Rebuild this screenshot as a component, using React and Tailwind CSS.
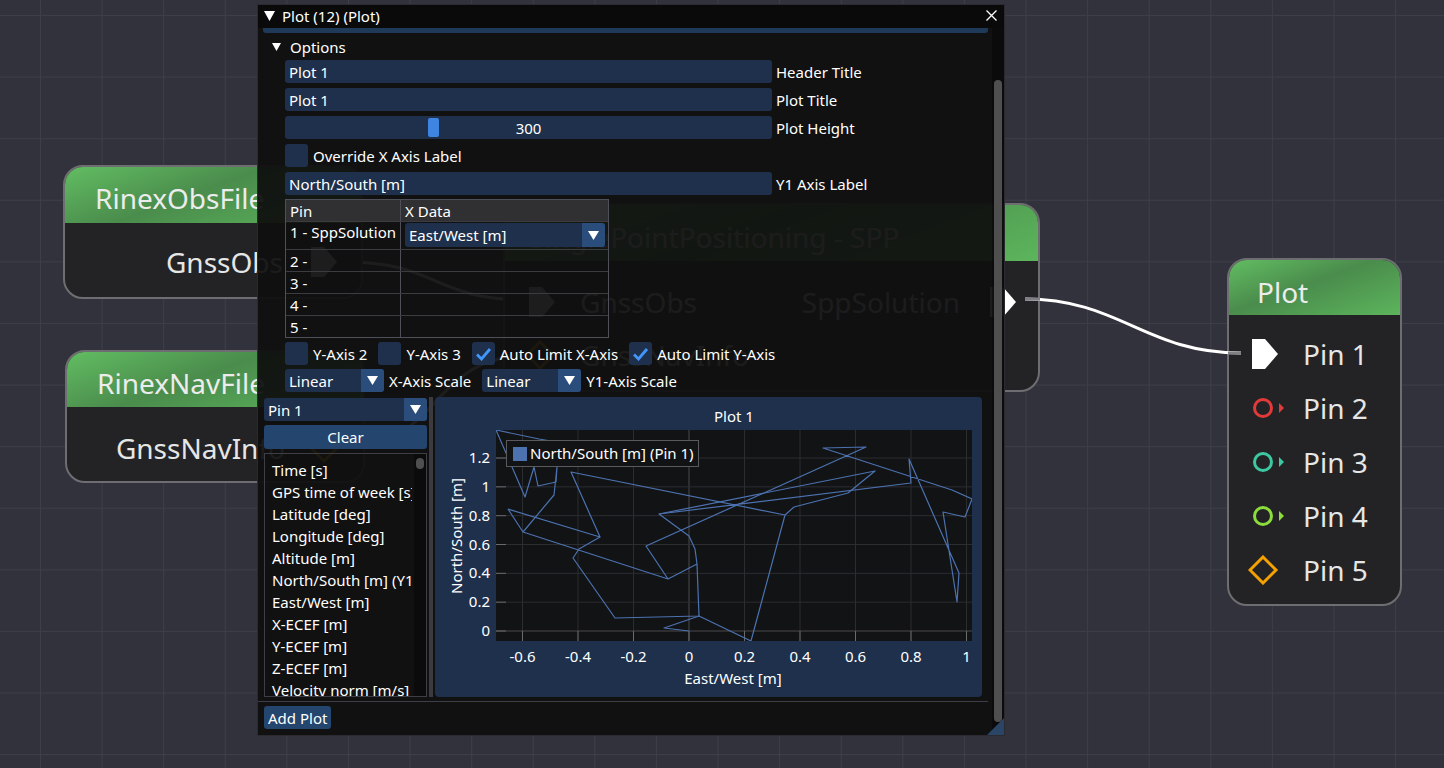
import React from "react";

const FRAME = "bg-[#1e304c]";

function Tri({ w = 11, h = 9 }) {
  return (
    <svg width={w} height={h} viewBox={`0 0 ${w} ${h}`}>
      <path d={`M0 0H${w}L${w / 2} ${h}Z`} fill="white" />
    </svg>
  );
}

function Combo({ value, className = "" }) {
  return (
    <div className={`flex h-[23px] rounded-[3px] overflow-hidden ${FRAME} ${className}`}>
      <div className="flex-1 flex items-center pl-[4px] whitespace-nowrap overflow-hidden">{value}</div>
      <div className="w-[23px] bg-[#2a4d7c] flex items-center justify-center">
        <Tri />
      </div>
    </div>
  );
}

function Check({ checked, label }) {
  return (
    <div className="flex items-center gap-[5px]">
      <div className={`w-[23px] h-[23px] rounded-[3px] ${FRAME} flex items-center justify-center`}>
        {checked && (
          <svg width="17" height="14" viewBox="0 0 17 14">
            <path d="M2 7.5L6.5 12L15 2" stroke="#4296fa" strokeWidth="2.8" fill="none" />
          </svg>
        )}
      </div>
      <span className="whitespace-nowrap">{label}</span>
    </div>
  );
}

function Field({ value, label }) {
  return (
    <div className="flex items-center gap-[4px]">
      <div className={`w-[487px] h-[23px] rounded-[3px] ${FRAME} flex items-center pl-[4px]`}>{value}</div>
      <span>{label}</span>
    </div>
  );
}

function PinIcon({ type, color }) {
  return (
    <svg width="40" height="30" viewBox="-4 0 40 30" className="shrink-0">
      {type === "out" && <path d="M0 0H13L26 15L13 30H0Z" fill="white" />}
      {type === "circle" && (
        <>
          <circle cx="11" cy="15" r="8.5" fill="none" stroke={color} strokeWidth="3" />
          <path d="M27 10L32 15L27 20Z" fill={color} />
        </>
      )}
      {type === "diamond" && <path d="M11 2L24 15L11 28L-2 15Z" fill="none" stroke={color} strokeWidth="3" />}
    </svg>
  );
}

const header =
  "bg-[linear-gradient(160deg,#62bd62_0%,#4a8c4c_45%,#5cb55c_100%)] text-[#ececec]";

// plot mapping
const xs = (v) => 689 + (v / 0.2) * 55.5;
const ys = (v) => 631 - (v / 0.2) * 28.83;
const xTicks = [-0.6, -0.4, -0.2, 0, 0.2, 0.4, 0.6, 0.8, 1];
const yTicks = [0, 0.2, 0.4, 0.6, 0.8, 1, 1.2];

const segs = [
  [[496,430],[525,497],[534,467],[538,486],[556,482],[557,467],[554,495],[523,532],[668,579],[697,564],[695,549],[689,536],[659,514],[911,483],[909,459],[959,573],[957,602],[943,512],[965,517],[972,499],[952,490],[823,448],[866,447],[646,546],[668,579]],
  [[508,509],[523,532]],
  [[508,509],[600,537],[571,472],[785,515],[751,641],[699,616],[664,628],[689,631]],
  [[785,515],[794,507],[848,493],[875,471],[659,514]],
  [[496,430],[539,439],[698,466]],
  [[600,537],[579,549],[573,558],[615,618],[699,616],[697,564]],
];

const listItems = [
  "Time [s]",
  "GPS time of week [s]",
  "Latitude [deg]",
  "Longitude [deg]",
  "Altitude [m]",
  "North/South [m] (Y1)",
  "East/West [m]",
  "X-ECEF [m]",
  "Y-ECEF [m]",
  "Z-ECEF [m]",
  "Velocity norm [m/s]",
];

function PlotChart() {
  return (
    <svg width="547" height="300" viewBox="435 397 547 300" className="block">
      <defs>
        <clipPath id="cv">
          <rect x="496" y="430" width="476" height="211" />
        </clipPath>
      </defs>
      <text x="734" y="422" fontSize="15" fill="white" textAnchor="middle">Plot 1</text>
      <rect x="496" y="430" width="476" height="211" fill="#121315" />
      {xTicks.map((v) => (
        <line key={"gx" + v} x1={xs(v)} x2={xs(v)} y1="430" y2="641" stroke={v === 0 ? "#4a4a4f" : "#2c2d31"} strokeWidth="1" />
      ))}
      {yTicks.map((v) => (
        <line key={"gy" + v} x1="496" x2="972" y1={ys(v)} y2={ys(v)} stroke={v === 0 ? "#4a4a4f" : "#2c2d31"} strokeWidth="1" />
      ))}
      {yTicks.map((v) => (
        <line key={"ty" + v} x1="496" x2="506" y1={ys(v)} y2={ys(v)} stroke="#6a6a6e" />
      ))}
      {xTicks.map((v) => (
        <line key={"tx" + v} x1={xs(v)} x2={xs(v)} y1="631" y2="641" stroke="#6a6a6e" />
      ))}
      <g clipPath="url(#cv)" fill="none" stroke="#4c72b0" strokeWidth="1.2" strokeLinejoin="round">
        {segs.map((s, i) => (
          <polyline key={i} points={s.map((p) => p.join(",")).join(" ")} />
        ))}
      </g>
      <rect x="506.5" y="440.5" width="192" height="26" fill="#121315" stroke="#5a5a5e" />
      <rect x="513" y="447" width="14" height="14" fill="#4c72b0" />
      <text x="530" y="459" fontSize="15" fill="white">North/South [m] (Pin 1)</text>
      {yTicks.map((v) => (
        <text key={"ly" + v} x="490" y={ys(v) + 5} fontSize="15" fill="white" textAnchor="end">
          {String(v)}
        </text>
      ))}
      {xTicks.map((v) => (
        <text key={"lx" + v} x={xs(v)} y="662" fontSize="15" fill="white" textAnchor="middle">
          {String(v)}
        </text>
      ))}
      <text x="733" y="684" fontSize="15" fill="white" textAnchor="middle">East/West [m]</text>
      <text transform="translate(462 536) rotate(-90)" fontSize="15" fill="white" textAnchor="middle">North/South [m]</text>
    </svg>
  );
}

export default function App() {
  return (
    <div className="relative w-[1444px] h-[768px] overflow-hidden font-['Noto_Sans',sans-serif] bg-[#32323c] bg-[linear-gradient(90deg,#3e3e48_1px,transparent_1px),linear-gradient(#3e3e48_1px,transparent_1px)] bg-size-[61.6px_61.6px] bg-position-[40px_15px]">
      {/* links on canvas */}
      <svg className="absolute inset-0" width="1444" height="768">
        <path d="M345 262 C440 262 430 300 530 300" stroke="white" strokeWidth="3" fill="none" />
        <path d="M345 448 C440 448 430 355 530 355" stroke="white" strokeWidth="3" fill="none" />
      </svg>

      {/* RinexObsFile */}
      <div className="absolute left-[63px] top-[165px] w-[300px] h-[134px] rounded-[20px] border-2 border-[#6e6e72] bg-[#232325] overflow-hidden text-[28px] text-[#e6e6e6]">
        <div className={`h-[56px] flex items-center pl-[30px] pt-[6px] ${header}`}>RinexObsFile</div>
        <div className="flex items-center justify-end gap-[24px] pr-[14px] mt-[24px] h-[30px]">
          <span>GnssObs</span>
          <PinIcon type="out" />
        </div>
      </div>

      {/* RinexNavFile */}
      <div className="absolute left-[65px] top-[350px] w-[300px] h-[133px] rounded-[20px] border-2 border-[#6e6e72] bg-[#232325] overflow-hidden text-[28px] text-[#e6e6e6]">
        <div className={`h-[55px] flex items-center pl-[30px] pt-[6px] ${header}`}>RinexNavFile</div>
        <div className="flex items-center justify-end gap-[24px] pr-[14px] mt-[26px] h-[30px]">
          <span>GnssNavInfo</span>
          <PinIcon type="diamond" color="#f5a200" />
        </div>
      </div>

      {/* SinglePointPositioning */}
      <div className="absolute left-[503px] top-[203px] w-[537px] h-[189px] rounded-[20px] border-2 border-[#6e6e72] bg-[#232325] overflow-hidden text-[28px] text-[#e6e6e6]">
        <div className={`h-[56px] flex items-center pl-[25px] pt-[8px] ${header}`}>SinglePointPositioning - SPP</div>
        <div className="flex items-center justify-between pl-[20px] pr-[12px] mt-[26px] h-[30px]">
          <div className="flex items-center gap-[15px]">
            <PinIcon type="out" />
            <span>GnssObs</span>
          </div>
          <div className="flex items-center gap-[26px]">
            <span>SppSolution</span>
            <PinIcon type="out" />
          </div>
        </div>
        <div className="flex items-center pl-[20px] mt-[23px] h-[30px] gap-[15px]">
          <PinIcon type="diamond" color="#f5a200" />
          <span>GnssNavInfo</span>
        </div>
      </div>

      {/* Plot node */}
      <div className="absolute left-[1227px] top-[258px] w-[175px] h-[348px] rounded-[20px] border-2 border-[#6e6e72] bg-[#232325] overflow-hidden text-[28px] text-[#e6e6e6]">
        <div className={`h-[55px] flex items-center pl-[28px] pt-[8px] ${header}`}>Plot</div>
        <div className="flex flex-col pl-[19px] pt-[12px]">
          {[
            ["out", "white", "Pin 1"],
            ["circle", "#e23a3a", "Pin 2"],
            ["circle", "#3cc8a0", "Pin 3"],
            ["circle", "#8cdc3c", "Pin 4"],
            ["diamond", "#f5a200", "Pin 5"],
          ].map(([t, c, l]) => (
            <div key={l} className="h-[54px] flex items-center gap-[15px]">
              <PinIcon type={t} color={c} />
              <span>{l}</span>
            </div>
          ))}
        </div>
      </div>

      {/* link SPP -> Plot */}
      <svg className="absolute inset-0 pointer-events-none" width="1444" height="768">
        <path d="M1025 299 C1120 299 1145 353 1241 353" stroke="white" strokeWidth="3" fill="none" />
        <line x1="1025" y1="299" x2="1040" y2="299.2" stroke="#808084" strokeWidth="3" />
        <line x1="1228" y1="353" x2="1241" y2="353" stroke="#808084" strokeWidth="3" />
      </svg>

      {/* ImGui window */}
      <div className="absolute left-[257px] top-[4px] w-[748px] h-[732px] flex flex-col border border-[#2a2a30] bg-[#0f0f0f]/[0.94] text-[15px] leading-[18px] text-white">
        <div className="h-[23px] shrink-0 bg-[#0a0a0a] flex items-center pl-[6px] pr-[7px] pb-[2px]">
          <Tri w={11} h={10} />
          <span className="ml-[7px]">Plot (12) (Plot)</span>
          <svg className="ml-auto" width="11" height="11" viewBox="0 0 11 11">
            <path d="M0.5 0.5L10.5 10.5M10.5 0.5L0.5 10.5" stroke="white" strokeWidth="1.3" />
          </svg>
        </div>

        <div className="flex-1 flex min-h-0">
          <div className="flex-1 flex flex-col pl-[6px] pr-[4px] overflow-hidden">
            <div className="-ml-px w-[725px] h-[5px] shrink-0 rounded-b-[3px] bg-[#1f3958]" />

            <div className="mt-[4px] h-[20px] flex items-center pl-[8px] gap-[9px] pb-[1px]">
              <Tri w={9} h={8} />
              <span>Options</span>
            </div>

            <div className="pl-[21px] flex flex-col">
              <div className="mt-[3px] flex flex-col gap-[5px]">
                <Field value="Plot 1" label="Header Title" />
                <Field value="Plot 1" label="Plot Title" />
                <div className="flex items-center gap-[4px]">
                  <div className={`relative w-[487px] h-[23px] rounded-[3px] ${FRAME} flex items-center justify-center`}>
                    <div className="absolute left-[143px] top-[2px] w-[11px] h-[19px] rounded-[2px] bg-[#3d85e0]" />
                    <span className="relative">300</span>
                  </div>
                  <span>Plot Height</span>
                </div>
                <Check label="Override X Axis Label" />
                <Field value="North/South [m]" label="Y1 Axis Label" />
              </div>

              {/* table */}
              <div className="mt-[4px] w-[324px] border border-[#4f4f59] flex flex-col">
                <div className="h-[21px] bg-[#303033] flex">
                  <div className="w-[115px] border-r border-[#4f4f59] pl-[4px] flex items-center">Pin</div>
                  <div className="flex-1 pl-[4px] flex items-center">X Data</div>
                </div>
                <div className="h-[28px] border-t border-[#3b3b40] flex">
                  <div className="w-[115px] border-r border-[#4f4f59] pl-[4px] pt-[1px]">1 - SppSolution</div>
                  <div className="flex-1 pl-[4px] pt-[1px]">
                    <Combo value="East/West [m]" className="w-[200px] h-[24px]" />
                  </div>
                </div>
                {["2 -", "3 -", "4 -", "5 -"].map((r) => (
                  <div key={r} className="h-[22px] border-t border-[#3b3b40] flex">
                    <div className="w-[115px] border-r border-[#4f4f59] pl-[4px] flex items-center">{r}</div>
                    <div className="flex-1" />
                  </div>
                ))}
              </div>

              <div className="mt-[4px] h-[23px] flex items-center gap-[11px]">
                <Check label="Y-Axis 2" />
                <Check label="Y-Axis 3" />
                <Check checked label="Auto Limit X-Axis" />
                <Check checked label="Auto Limit Y-Axis" />
              </div>

              <div className="mt-[4px] h-[23px] flex items-center gap-[11px]">
                <div className="flex items-center gap-[5px]">
                  <Combo value="Linear" className="w-[99px]" />
                  <span>X-Axis Scale</span>
                </div>
                <div className="flex items-center gap-[5px]">
                  <Combo value="Linear" className="w-[99px]" />
                  <span>Y1-Axis Scale</span>
                </div>
              </div>
            </div>

            {/* plot section */}
            <div className="mt-[5px] h-[300px] shrink-0 flex">
              <div className="w-[163px] flex flex-col pt-[1px]">
                <Combo value="Pin 1" className="w-[163px]" />
                <div className="mt-[4px] h-[24px] rounded-[3px] bg-[#24456d] flex items-center justify-center">Clear</div>
                <div className="mt-[4px] flex-1 min-h-0 border border-[#3e3e47] flex overflow-hidden">
                  <div className="flex-1 min-w-0 pl-[7px] pt-[5px] overflow-hidden">
                    {listItems.map((it) => (
                      <div key={it} className="h-[22px] flex items-center whitespace-nowrap">{it}</div>
                    ))}
                  </div>
                  <div className="w-[14px] pl-[2px] shrink-0">
                    <div className="w-[12px] h-full bg-[#050505]/50 pt-[4px] pl-[2px]">
                      <div className="w-[8px] h-[11px] rounded-full bg-[#4f4f4f]" />
                    </div>
                  </div>
                </div>
              </div>
              <div className="ml-[2px] w-[4px] bg-[#3a3a40]" />
              <div className={`ml-[2px] w-[547px] h-[300px] rounded-[4px] overflow-hidden ${FRAME}`}>
                <PlotChart />
              </div>
            </div>

            <div className="-ml-[6px] mt-[4px] w-[730px] h-px shrink-0 bg-[#3e3e47]" />

            <div className="mt-[4px] self-start h-[23px] px-[4px] rounded-[3px] bg-[#24456d] flex items-center">Add Plot</div>
          </div>

          <div className="w-[12px] shrink-0 bg-[#050505]/50 pt-[52px] pl-[2px]">
            <div className="w-[8px] h-[642px] rounded-full bg-[#4f4f4f]" />
          </div>
        </div>

        <svg className="absolute right-0 bottom-0" width="17" height="17" viewBox="0 0 17 17">
          <path d="M17 0V17H0Z" fill="#2a4566" />
        </svg>
      </div>
    </div>
  );
}
